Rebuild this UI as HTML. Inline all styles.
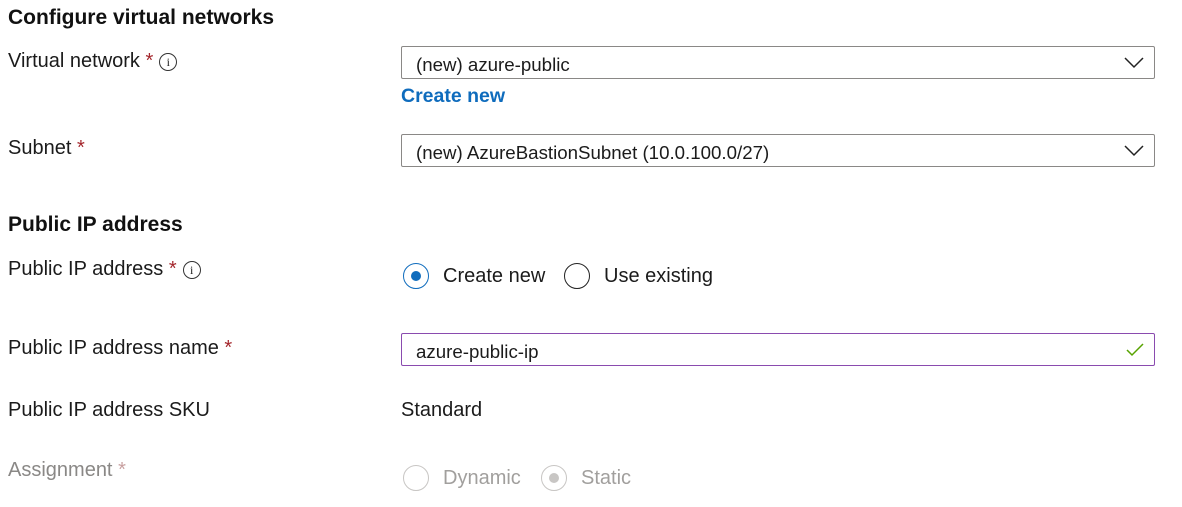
<!DOCTYPE html>
<html><head><meta charset="utf-8"><style>
body{margin:0;width:1182px;height:507px;background:#fff;font-family:"Liberation Sans",sans-serif;color:#1b1b1b;position:relative;overflow:hidden}
.t{position:absolute;white-space:nowrap;line-height:1}
.h{font-size:21px;font-weight:bold;color:#111}
.l{font-size:20px}
.r{color:#a4262c}
.box{position:absolute;left:401px;width:752px;height:31px;border:1px solid #8a8886;border-radius:2px;box-sizing:content-box}
.box span{position:absolute;left:14px;top:7px;font-size:18.7px}
.info{display:inline-block;width:16px;height:16px;border:1.3px solid #333;border-radius:50%;font-size:12px;text-align:center;line-height:16px;vertical-align:1px;margin-left:6px;font-family:"Liberation Serif",serif}
.rad{position:absolute;width:26px;height:26px;border:1.5px solid #222;border-radius:50%;box-sizing:border-box}
</style></head><body>
<div class="t h" style="left:8px;top:7px">Configure virtual networks</div>
<div class="t l" style="left:8px;top:51px">Virtual network <span class="r">*</span><span class="info">i</span></div>
<div class="box" style="top:46px"><span>(new) azure-public</span>
<svg style="position:absolute;right:10px;top:10px" width="20" height="12"><path d="M1 1 L10 10 L19 1" fill="none" stroke="#222" stroke-width="1.5"/></svg></div>
<div class="t" style="left:401px;top:87px;font-size:19.5px;font-weight:bold;color:#0f6cbd">Create new</div>
<div class="t l" style="left:8px;top:138px">Subnet <span class="r">*</span></div>
<div class="box" style="top:134px"><span>(new) AzureBastionSubnet (10.0.100.0/27)</span>
<svg style="position:absolute;right:10px;top:10px" width="20" height="12"><path d="M1 1 L10 10 L19 1" fill="none" stroke="#222" stroke-width="1.5"/></svg></div>
<div class="t h" style="left:8px;top:214px">Public IP address</div>
<div class="t l" style="left:8px;top:259px">Public IP address <span class="r">*</span><span class="info">i</span></div>
<div class="rad" style="left:403px;top:263px;border-color:#0f6cbd"><div style="position:absolute;left:6.5px;top:6.5px;width:10px;height:10px;border-radius:50%;background:#0f6cbd"></div></div>
<div class="t l" style="left:443px;top:266px">Create new</div>
<div class="rad" style="left:564px;top:263px"></div>
<div class="t l" style="left:604px;top:266px">Use existing</div>
<div class="t l" style="left:8px;top:338px">Public IP address name <span class="r">*</span></div>
<div class="box" style="top:333px;border-color:#8a4baf"><span>azure-public-ip</span>
<svg style="position:absolute;right:10px;top:9px" width="18" height="14"><path d="M1 7 L6 12 L17 1" fill="none" stroke="#57a300" stroke-width="1.5"/></svg></div>
<div class="t l" style="left:8px;top:400px">Public IP address SKU</div>
<div class="t l" style="left:401px;top:400px">Standard</div>
<div class="t l" style="left:8px;top:460px;color:#8a8886">Assignment <span style="color:#c8a0a0">*</span></div>
<div class="rad" style="left:403px;top:465px;border-color:#c8c6c4"></div>
<div class="t l" style="left:443px;top:468px;color:#a19f9d">Dynamic</div>
<div class="rad" style="left:541px;top:465px;border-color:#c8c6c4"><div style="position:absolute;left:6.5px;top:6.5px;width:10px;height:10px;border-radius:50%;background:#c8c6c4"></div></div>
<div class="t l" style="left:581px;top:468px;color:#a19f9d">Static</div>
</body></html>
